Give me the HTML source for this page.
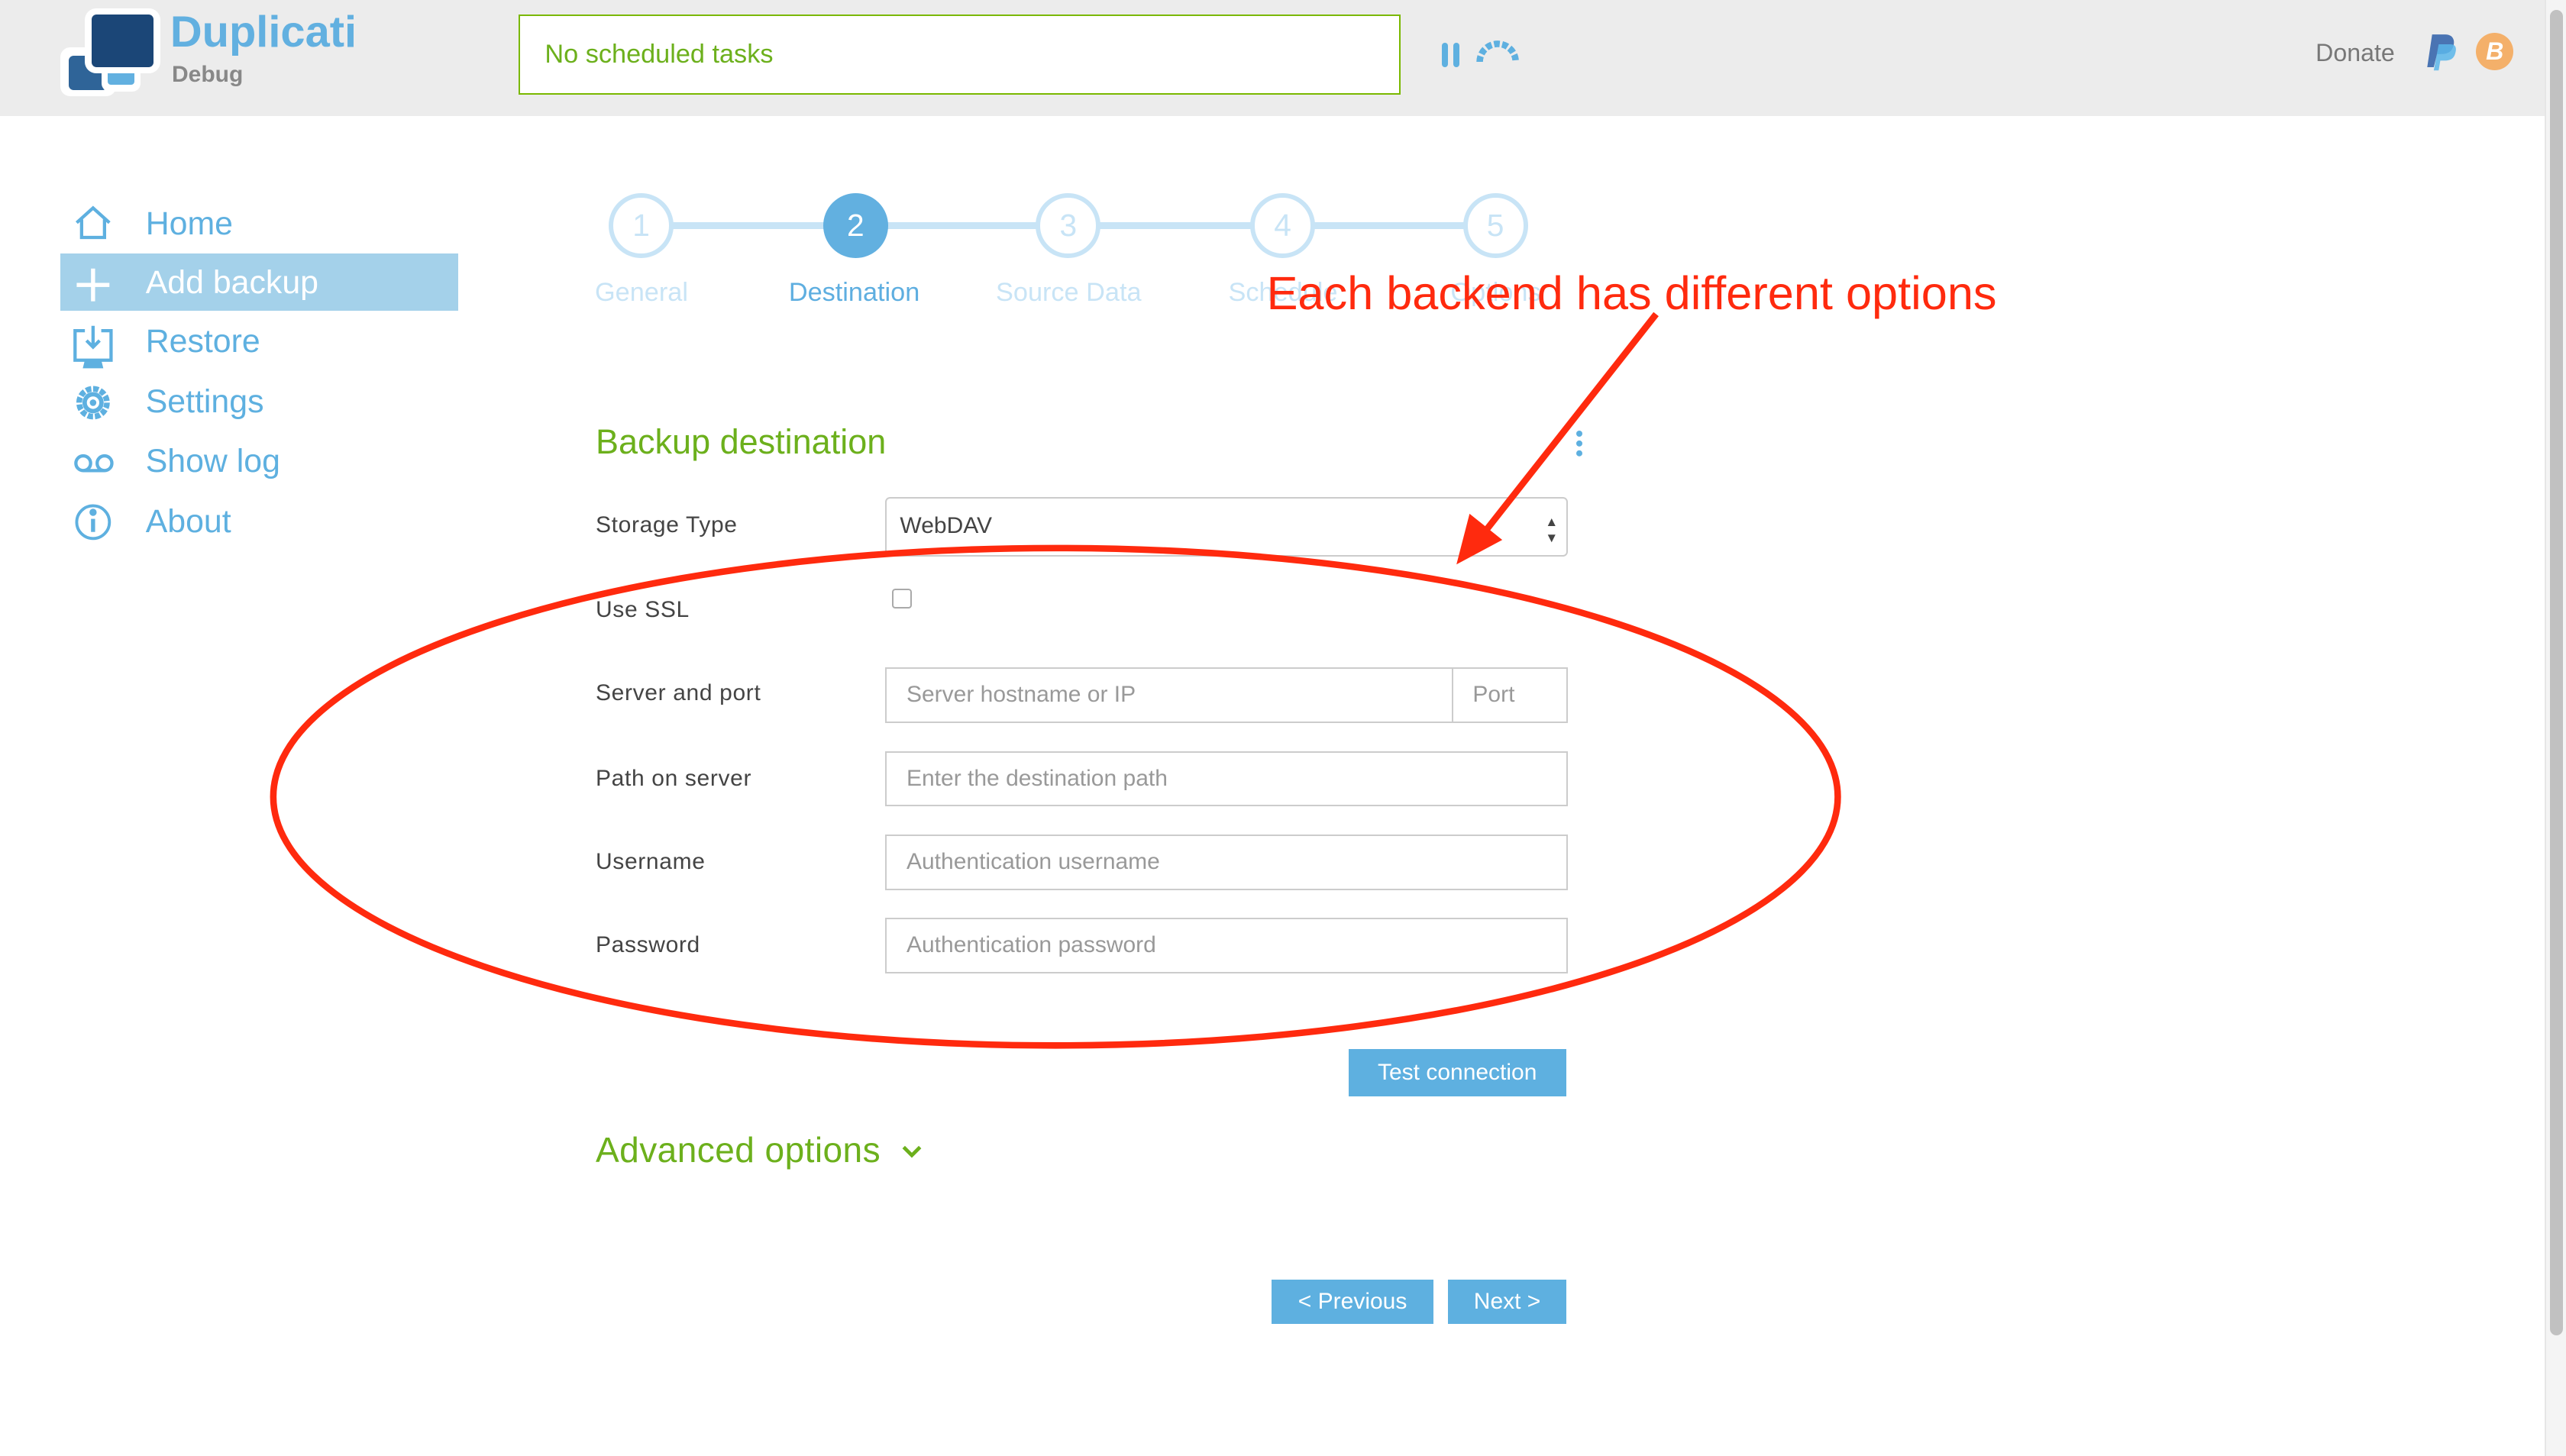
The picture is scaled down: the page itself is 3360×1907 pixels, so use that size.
<!DOCTYPE html>
<html><head><meta charset="utf-8">
<style>
html,body{margin:0;padding:0;background:#fff;}
body{width:1568px;height:889.5px;zoom:2.142857;position:relative;overflow:hidden;font-family:"Liberation Sans",sans-serif;}
.a{position:absolute;}
.hdr{left:0;top:0;width:1555px;height:71px;background:#ececec;}
.nav{left:89px;font-size:20px;color:#5eb0e0;line-height:24px;}
.lbl{left:364px;font-size:14px;color:#444;letter-spacing:0.3px;}
.inp{border:1px solid #ccc;background:#fff;box-sizing:border-box;font-size:14px;color:#999;padding-left:12px;line-height:32px;}
.step{width:34px;height:34px;border:3px solid #c8e4f6;border-radius:50%;background:#fff;color:#c8e4f6;font-size:19px;text-align:center;line-height:34px;}
.sl{font-size:16px;color:#c8e4f6;top:170px;width:130px;text-align:center;}
.btn{background:#5eb0e0;color:#fff;font-size:14px;text-align:center;}
</style></head><body>
<div class="a hdr"></div>
<div class="a" style="left:37px;top:29px;width:34px;height:30px;background:#fff;border-radius:6px"></div>
<div class="a" style="left:42px;top:34px;width:24px;height:21px;background:#2f6498;border-radius:3px"></div>
<div class="a" style="left:62px;top:34px;width:24px;height:22px;background:#fff;border-radius:5px"></div>
<div class="a" style="left:66px;top:38px;width:16px;height:14px;background:#62b0e0;border-radius:2px"></div>
<div class="a" style="left:52px;top:5px;width:46px;height:40px;background:#fff;border-radius:7px"></div>
<div class="a" style="left:56px;top:9px;width:38px;height:32px;background:#1b4677;border-radius:3px"></div>
<div class="a" style="left:104px;top:4px;font-size:27px;font-weight:bold;color:#62b0e0;">Duplicati</div>
<div class="a" style="left:105px;top:38px;font-size:14px;font-weight:bold;color:#888;">Debug</div>
<div class="a" style="left:317px;top:9px;width:539px;height:49px;border:1px solid #7ab800;background:#fff;box-sizing:border-box;font-size:16px;color:#6cb01c;line-height:47px;padding-left:15px">No scheduled tasks</div>
<div class="a" style="left:881px;top:26px;width:4px;height:15px;background:#5eb0e0;border-radius:2px"></div>
<div class="a" style="left:888px;top:26px;width:4px;height:15px;background:#5eb0e0;border-radius:2px"></div>
<svg class="a" style="left:900px;top:24px" width="30" height="16"><path d="M4 14 A11 11 0 0 1 26 14" fill="none" stroke="#5eb0e0" stroke-width="4" stroke-dasharray="3.5 1.5"/></svg>
<div class="a" style="left:1415px;top:24px;font-size:15px;color:#777">Donate</div>
<svg class="a" style="left:1481px;top:20px" width="22" height="24"><path d="M5 1h8c5 0 6 4 5 7c-1 4-4 5-8 5h-2l-2 8H2z" fill="#4a74b3"/><path d="M9 7h7c4 0 4 3 3 6c-1 3-3 4-7 4h-2l-1 6H6z" fill="#5bb6ea" opacity=".85"/></svg>
<div class="a" style="left:1513px;top:20px;width:23px;height:23px;border-radius:50%;background:#f4b06a;color:#fff;font-size:15px;font-weight:bold;text-align:center;line-height:23px;font-style:italic">B</div>
<div class="a" style="left:1555px;top:0;width:13px;height:890px;background:#f4f4f4;border-left:1px solid #e6e6e6"></div>
<div class="a" style="left:1558px;top:6px;width:8px;height:810px;background:#c1c1c1;border-radius:4px"></div>
<div class="a" style="left:37px;top:155px;width:243px;height:35px;background:#a4d1ea"></div>
<svg class="a" style="left:44px;top:124px" width="28" height="220" fill="none" stroke="#5eb0e0" stroke-width="2">
<path d="M3 12 L13 3 L23 12 M6 10 V21 H20 V10"/>
<path d="M3 50 H23 M13 40 V60" stroke="#fff" stroke-width="2.5"/>
<path d="M8 78 H2 V96 H24 V78 H18 M13 75 V88 M9 84 L13 88 L17 84" stroke-width="2"/>
<path d="M9 96 L8 100 H18 L17 96" fill="#5eb0e0"/>
<circle cx="13" cy="122" r="8.5" stroke-width="3.5" stroke-dasharray="3.3 1.15"/>
<circle cx="13" cy="122" r="6.5" fill="#5eb0e0" stroke="none"/>
<circle cx="13" cy="122" r="3.8" fill="#fff" stroke="none"/>
<circle cx="13" cy="122" r="2" fill="#5eb0e0" stroke="none"/>
<circle cx="7" cy="159" r="4.5"/><circle cx="20" cy="159" r="4.5"/><path d="M7 163.5 H20"/>
<circle cx="13" cy="195" r="10" stroke-width="1.8"/><path d="M13 193 V201" stroke-width="2.5"/><circle cx="13" cy="189" r="1.2" fill="#5eb0e0"/>
</svg>
<div class="a nav" style="top:125px">Home</div>
<div class="a nav" style="top:161px;color:#fff">Add backup</div>
<div class="a nav" style="top:197px">Restore</div>
<div class="a nav" style="top:234px">Settings</div>
<div class="a nav" style="top:270px">Show log</div>
<div class="a nav" style="top:307px">About</div>
<div class="a" style="left:392px;top:136px;width:522px;height:4px;background:#c8e4f6"></div>
<div class="a step" style="left:372px;top:118px">1</div>
<div class="a step" style="left:503px;top:118px;background:#62b0e0;border-color:#62b0e0;color:#fff">2</div>
<div class="a step" style="left:633px;top:118px">3</div>
<div class="a step" style="left:764px;top:118px">4</div>
<div class="a step" style="left:894px;top:118px">5</div>
<div class="a sl" style="left:327px">General</div>
<div class="a sl" style="left:457px;color:#5eaee0">Destination</div>
<div class="a sl" style="left:588px">Source Data</div>
<div class="a sl" style="left:719px">Schedule</div>
<div class="a sl" style="left:849px">Options</div>
<div class="a" style="left:364px;top:258px;font-size:21px;color:#6cb01c">Backup destination</div>
<div class="a" style="left:963px;top:263px;width:4px;height:4px;border-radius:50%;background:#5eb0e0;box-shadow:0 6px 0 #5eb0e0,0 12px 0 #5eb0e0"></div>
<div class="a lbl" style="top:313px">Storage Type</div>
<div class="a lbl" style="top:365px">Use SSL</div>
<div class="a lbl" style="top:416px">Server and port</div>
<div class="a lbl" style="top:468px">Path on server</div>
<div class="a lbl" style="top:519px">Username</div>
<div class="a lbl" style="top:570px">Password</div>
<div class="a inp" style="left:541px;top:304px;width:417px;height:36px;color:#444;padding-left:8px;line-height:34px;border-radius:3px">WebDAV<span style="position:absolute;right:5px;font-size:8px;line-height:10px;top:9px;color:#444">▲<br>▼</span></div>
<div class="a" style="left:545px;top:360px;width:12px;height:12px;border:1px solid #aaa;border-radius:2px;box-sizing:border-box;background:#fff"></div>
<div class="a inp" style="left:541px;top:408px;width:347px;height:34px">Server hostname or IP</div>
<div class="a inp" style="left:887px;top:408px;width:71px;height:34px">Port</div>
<div class="a inp" style="left:541px;top:459px;width:417px;height:34px">Enter the destination path</div>
<div class="a inp" style="left:541px;top:510px;width:417px;height:34px">Authentication username</div>
<div class="a inp" style="left:541px;top:561px;width:417px;height:34px">Authentication password</div>
<div class="a btn" style="left:824px;top:641px;width:133px;height:29px;line-height:29px">Test connection</div>
<div class="a" style="left:364px;top:690px;font-size:21.5px;color:#6cb01c;letter-spacing:0.2px">Advanced options</div>
<svg class="a" style="left:550px;top:698px" width="14" height="12"><path d="M2 3 L7 8 L12 3" fill="none" stroke="#6cb01c" stroke-width="2.2"/></svg>
<div class="a btn" style="left:777px;top:782px;width:99px;height:27px;line-height:27px">&lt; Previous</div>
<div class="a btn" style="left:885px;top:782px;width:72px;height:27px;line-height:27px">Next &gt;</div>
<div class="a" style="left:774px;top:163px;font-size:28.6px;color:#ff2a0e;">Each backend has different options</div>
<svg class="a" style="left:0;top:0" width="1568" height="890">
<ellipse cx="645" cy="487" rx="478" ry="152" fill="none" stroke="#ff2a0e" stroke-width="4"/>
<path d="M1012 192 L905 328" stroke="#ff2a0e" stroke-width="4"/>
<path d="M890 345 L898 314 L918 330 Z" fill="#ff2a0e"/>
</svg>
</body></html>
